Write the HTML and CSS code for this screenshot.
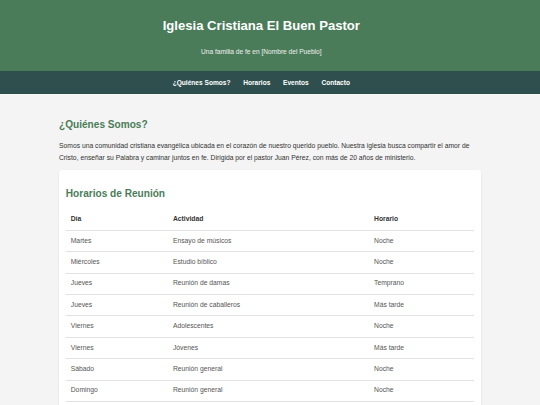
FILE: index.html
```html
<!DOCTYPE html>
<html lang="es">
<head>
<meta charset="utf-8">
<title>Iglesia Cristiana El Buen Pastor</title>
<link rel="stylesheet" href="styles.css">
</head>
<body>
<header class="site-header">
  <h1 class="site-title">Iglesia Cristiana El Buen Pastor</h1>
  <p class="site-tagline">Una familia de fe en [Nombre del Pueblo]</p>
</header>
<nav class="site-nav">
  <a href="#quienes">¿Quiénes Somos?</a>
  <a href="#horarios">Horarios</a>
  <a href="#eventos">Eventos</a>
  <a href="#contacto">Contacto</a>
</nav>
<main class="container">
  <section id="quienes" class="about">
    <h2 class="section-title">¿Quiénes Somos?</h2>
    <p class="about-text">Somos una comunidad cristiana evangélica ubicada en el corazón de nuestro querido pueblo. Nuestra iglesia busca compartir el amor de Cristo, enseñar su Palabra y caminar juntos en fe. Dirigida por el pastor Juan Pérez, con más de 20 años de ministerio.</p>
  </section>
  <section id="horarios" class="card">
    <h2 class="card-title">Horarios de Reunión</h2>
    <table class="schedule">
      <colgroup>
        <col class="col-day">
        <col class="col-activity">
        <col class="col-time">
      </colgroup>
      <thead>
        <tr><th>Día</th><th>Actividad</th><th>Horario</th></tr>
      </thead>
      <tbody>
        <tr><td>Martes</td><td>Ensayo de músicos</td><td>Noche</td></tr>
        <tr><td>Miércoles</td><td>Estudio bíblico</td><td>Noche</td></tr>
        <tr><td>Jueves</td><td>Reunión de damas</td><td>Temprano</td></tr>
        <tr><td>Jueves</td><td>Reunión de caballeros</td><td>Más tarde</td></tr>
        <tr><td>Viernes</td><td>Adolescentes</td><td>Noche</td></tr>
        <tr><td>Viernes</td><td>Jóvenes</td><td>Más tarde</td></tr>
        <tr><td>Sábado</td><td>Reunión general</td><td>Noche</td></tr>
        <tr><td>Domingo</td><td>Reunión general</td><td>Noche</td></tr>
      </tbody>
    </table>
  </section>
</main>
</body>
</html>
```
FILE: styles.css
```css
* { box-sizing: border-box; }

html, body {
  margin: 0;
  padding: 0;
}

body {
  background: #f4f4f4;
  color: #333;
  font-family: "Liberation Sans", Arial, sans-serif;
  font-size: 6.75px;
}

.site-header {
  background: #4a7c59;
  color: #fff;
  text-align: center;
  padding: 18px 17.4px 15.5px 0;
}

.site-title {
  margin: 0 0 14.6px;
  font-size: 13.1px;
  line-height: 15px;
  font-weight: bold;
}

.site-tagline {
  margin: 0;
  font-size: 6.6px;
  line-height: 7.6px;
  color: #f0f0f0;
}

.site-nav {
  background: #2f4f4f;
  display: flex;
  justify-content: center;
  padding: 6px 17.4px 6px 0;
}

.site-nav a {
  color: #fff;
  text-decoration: none;
  font-weight: bold;
  font-size: 6.6px;
  line-height: 11.3px;
  margin: 0 6.35px;
}

.container {
  width: 422px;
  margin: 0 auto;
  padding-top: 24.9px;
}

.section-title,
.card-title {
  color: #4a7c59;
  font-size: 10.1px;
  line-height: 11.6px;
  font-weight: bold;
}

.section-title {
  margin: 0 0 9.2px;
}

.about-text {
  margin: 0 0 5px;
  line-height: 12.5px;
}

.card {
  background: #fff;
  border-radius: 3.4px;
  padding: 6.75px;
  box-shadow: 0 1px 2.5px rgba(0, 0, 0, 0.1);
}

.card-title {
  margin: 11.4px 0 10.1px;
}

.schedule {
  width: 100%;
  border-collapse: collapse;
  table-layout: fixed;
}

.col-day { width: 102px; }
.col-activity { width: 201px; }
.col-time { width: 105px; }

.schedule th,
.schedule td {
  text-align: left;
  padding: 4.8px 5px;
  line-height: 10.8px;
  font-size: 6.75px;
  border-bottom: 1px solid #e2e2e2;
}

.schedule th {
  font-weight: bold;
  color: #333;
}

.schedule td {
  color: #555;
}
```
